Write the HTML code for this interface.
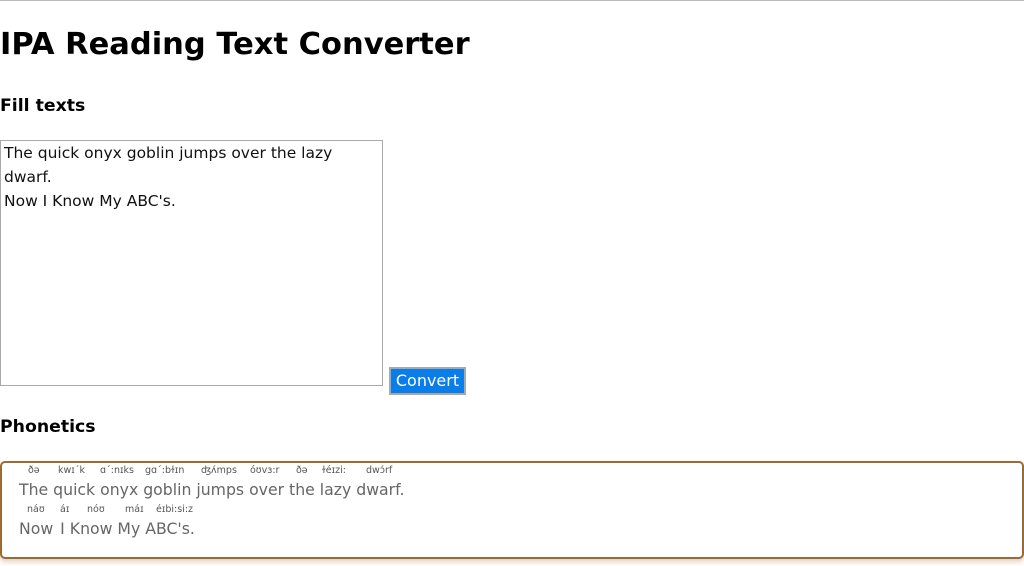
<!DOCTYPE html>
<html><head><meta charset="utf-8"><style>
body{margin:0;width:1024px;height:566px;overflow:hidden;font-family:"DejaVu Sans","Liberation Sans",sans-serif;background:#fff;position:relative;border-top:1px solid #bbb;box-sizing:border-box}
.a{position:absolute;white-space:nowrap}
h1{position:absolute;left:0;top:26px;margin:0;font-size:30.5px;font-weight:bold;color:#000}
h3{position:absolute;left:0;margin:0;font-size:17.3px;font-weight:bold;color:#000}
.ta{position:absolute;left:0;top:139px;width:383px;height:246px;border:1px solid #aaa;box-sizing:border-box;font-size:15.5px;line-height:24px;padding:0 3px;color:#111;white-space:nowrap}
.btn{position:absolute;left:389px;top:366px;width:77px;height:28px;box-sizing:border-box;background:#0a7ee8;border:2px solid #a8a8a8;color:#fff;font-size:16px;text-align:center;line-height:24px}
.box{position:absolute;left:0;top:460px;width:1024px;height:98px;box-sizing:border-box;border:2px solid #9a6a35;border-radius:5px;box-shadow:0 3px 5px rgba(180,120,80,.35)}
.r{font-size:9.5px;color:#555}
.t{font-size:15.7px;color:#666}
</style></head><body>
<h1>IPA Reading Text Converter</h1>
<h3 style="top:95px">Fill texts</h3>
<div class="ta">The quick onyx goblin jumps over the lazy<br>dwarf.<br>Now I Know My ABC's.</div>
<div class="btn">Convert</div>
<h3 style="top:416px">Phonetics</h3>
<div class="box"></div>
<span class="a r" style="left:28px;top:464px">ðə</span>
<span class="a r" style="left:58px;top:464px">kwɪˊk</span>
<span class="a r" style="left:100px;top:464px">ɑˊ:nɪks</span>
<span class="a r" style="left:145px;top:464px">gɑˊ:bɫɪn</span>
<span class="a r" style="left:201px;top:464px">ʤʌ́mps</span>
<span class="a r" style="left:250px;top:464px">óʊvɜ:r</span>
<span class="a r" style="left:296px;top:464px">ðə</span>
<span class="a r" style="left:322px;top:464px">ɫéɪzi:</span>
<span class="a r" style="left:366px;top:464px">dwɔ́rf</span>
<span class="a t" style="left:19px;top:479px">The quick onyx goblin jumps over the lazy dwarf.</span>
<span class="a r" style="left:27px;top:503px">náʊ</span>
<span class="a r" style="left:60px;top:503px">áɪ</span>
<span class="a r" style="left:87px;top:503px">nóʊ</span>
<span class="a r" style="left:125px;top:503px">máɪ</span>
<span class="a r" style="left:156px;top:503px">éɪbi:si:z</span>
<span class="a t" style="left:19px;top:518px">Now <span style="margin-left:2px">I</span> Know My ABC's.</span>
</body></html>
